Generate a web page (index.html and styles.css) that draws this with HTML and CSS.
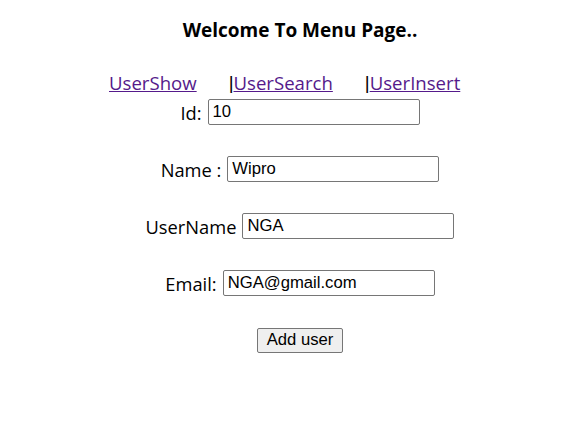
FILE: index.html
```html
<!DOCTYPE html>
<html>
<head>
<meta charset="utf-8">
<link rel="stylesheet" href="styles.css">
</head>
<body>
<div class="page">
  <h1 class="title">Welcome To Menu Page..</h1>
  <nav class="nav">
    <a href="#" class="link">UserShow</a>
    <span class="sep">|</span><a href="#" class="link">UserSearch</a>
    <span class="sep">|</span><a href="#" class="link">UserInsert</a>
  </nav>
  <form class="form">
    <div class="row row-first"><label class="label">Id:</label><input class="field" type="text" value="10"></div>
    <div class="row"><label class="label">Name :</label><input class="field" type="text" value="Wipro"></div>
    <div class="row"><label class="label">UserName</label><input class="field" type="text" value="NGA"></div>
    <div class="row"><label class="label">Email:</label><input class="field" type="text" value="NGA@gmail.com"></div>
    <div class="row"><button class="btn" type="button">Add user</button></div>
  </form>
</div>
</body>
</html>
```
FILE: styles.css
```css
html, body {
  margin: 0;
  padding: 0;
  background: #fff;
}
.page {
  padding-left: 17px;
  font-family: "Open Sans", "Noto Sans", sans-serif;
  color: #000;
  text-align: center;
}
.title {
  margin: 0;
  padding-top: 17px;
  font-size: 19px;
  font-weight: 700;
  line-height: 26px;
}
.nav {
  margin-top: 26px;
  display: flex;
  justify-content: flex-start;
  padding-left: 92px;
  font-size: 18.6px;
  line-height: 27px;
  height: 30px;
}
.link {
  color: #551a8b;
  text-decoration: underline;
}
.sep {
  margin-left: 32px;
  font-family: "Liberation Sans", Arial, sans-serif;
  color: #000;
}
.form {
  display: flex;
  flex-direction: column;
  align-items: center;
}
.row {
  display: flex;
  align-items: center;
  justify-content: center;
  gap: 6px;
  height: 26px;
  margin-top: 31px;
  font-size: 18.3px;
}
.row-first {
  margin-top: 0;
}
.label {
  white-space: nowrap;
}
.field {
  box-sizing: border-box;
  width: 212px;
  height: 26px;
  border: 1px solid #767676;
  border-radius: 2px;
  padding: 1px 4px;
  font-family: "Liberation Sans", Arial, sans-serif;
  font-size: 16.67px;
  color: #000;
  margin: 0;
}
.btn {
  box-sizing: border-box;
  width: 86px;
  height: 25px;
  border: 1px solid #767676;
  border-radius: 2px;
  background: #efefef;
  font-family: "Liberation Sans", Arial, sans-serif;
  font-size: 16.67px;
  color: #000;
  padding: 0;
}
```
